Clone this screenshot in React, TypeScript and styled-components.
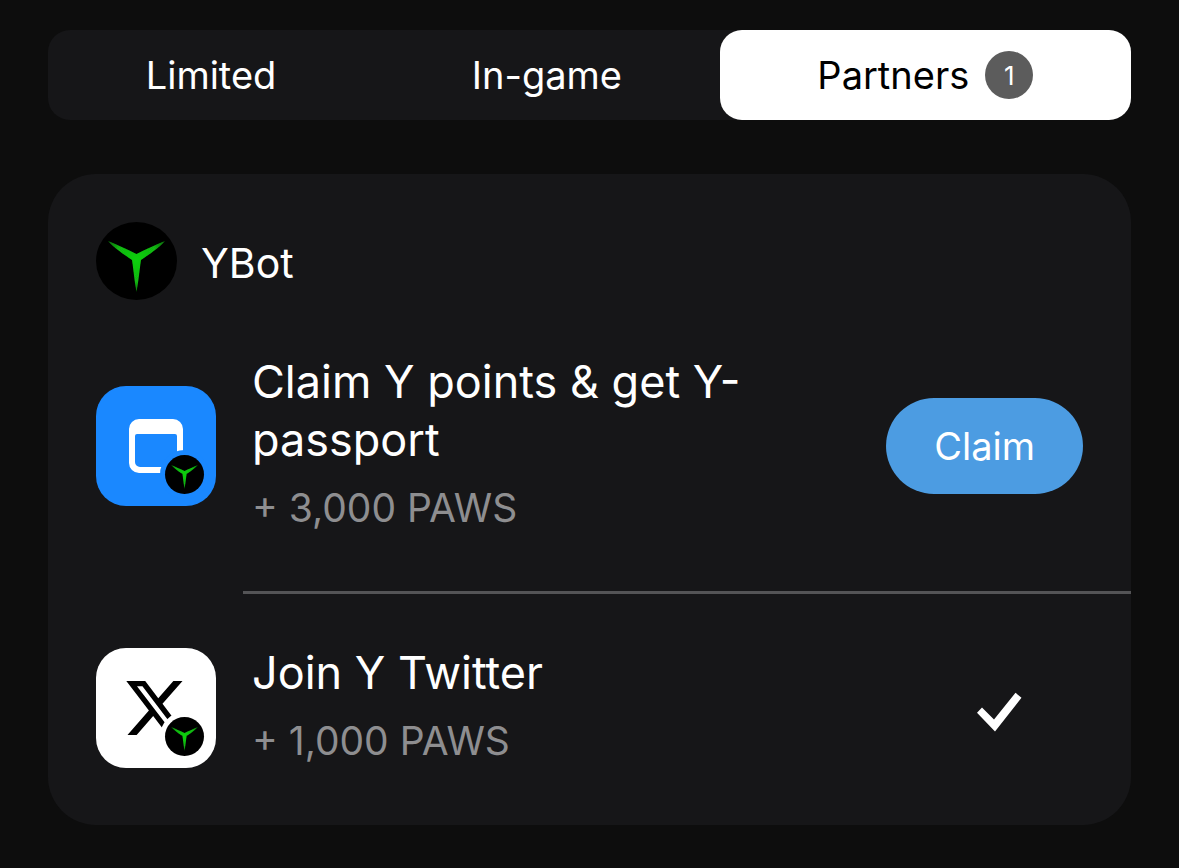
import React, { useId, useState } from 'react';
import styled, { createGlobalStyle } from 'styled-components';

const GlobalStyle = createGlobalStyle`
  * {
    box-sizing: border-box;
  }

  body {
    margin: 0;
    background: #0d0d0d;
    color: #ffffff;
    font-family: Inter, 'Liberation Sans', sans-serif;
  }
`;

const Page = styled.main`
  display: flex;
  flex-direction: column;
  gap: 54px;
  padding: 30px 48px 40px;
`;

const TabBar = styled.div`
  display: flex;
  border-radius: 22px;
  background: #161618;
`;

const Tab = styled.button<{ $active: boolean }>`
  display: flex;
  flex: 1 1 auto;
  align-items: center;
  justify-content: center;
  gap: 16px;
  height: 90px;
  padding: 0 16px;
  border: 0;
  border-radius: 22px;
  background: ${({ $active }) => ($active ? '#ffffff' : 'transparent')};
  color: ${({ $active }) => ($active ? '#000000' : '#ffffff')};
  font: inherit;
  font-size: 38px;
  cursor: pointer;
`;

const TabCount = styled.span`
  display: flex;
  align-items: center;
  justify-content: center;
  width: 48px;
  height: 48px;
  border-radius: 50%;
  background: #5c5c5c;
  color: #ffffff;
  font-size: 26px;
`;

const Card = styled.section`
  padding: 48px 0 1px;
  border-radius: 48px;
  background: #161618;
`;

const PartnerHeader = styled.header`
  display: flex;
  align-items: center;
  gap: 24px;
  padding: 0 48px 3px;
`;

const PartnerName = styled.h2`
  margin: 0;
  padding-top: 4px;
  font-size: 41px;
  font-weight: 400;
  line-height: 50px;
`;

const TaskList = styled.ul`
  margin: 0;
  padding: 0;
  list-style: none;
`;

const TaskItem = styled.li`
  & + &::before {
    content: '';
    display: block;
    height: 3px;
    margin-left: 195px;
    background: #545456;
  }
`;

const TaskRow = styled.div`
  display: flex;
  align-items: center;
  gap: 36px;
  padding: 50px 48px 52px;
`;

const TileSvg = styled.svg`
  flex: none;
  display: block;
  border-radius: 30px;
`;

const TaskText = styled.div`
  flex: 1;
  min-width: 0;
`;

const TaskTitle = styled.h3`
  margin: 0 0 8px;
  font-size: 45px;
  font-weight: 400;
  line-height: 58px;
`;

const Reward = styled.p`
  margin: 0;
  color: #8e8e90;
  font-size: 39px;
  line-height: 62px;
`;

const ClaimButton = styled.button`
  flex: none;
  height: 96px;
  padding: 0 48px;
  border: 0;
  border-radius: 48px;
  background: #4c9ce2;
  color: #ffffff;
  font: inherit;
  font-size: 38px;
  cursor: pointer;
`;

const DoneMark = styled.div`
  display: flex;
  flex: none;
  justify-content: center;
  width: 168px;
  padding-top: 8px;
`;

const Y_SHAPE =
  'M12 19 C20 22 33 28 40.500 32 C48 28 61 22 69 19 C63 26 51 34 45 38 C43.500 48 42.500 60 40.500 70 C38.500 60 37.500 48 36 38 C30 34 18 26 12 19Z';

function YMark() {
  const id = useId();
  return (
    <>
      <defs>
        <radialGradient id={`${id}fill`} gradientUnits="userSpaceOnUse" cx="40.5" cy="38" r="36">
          <stop offset="0" stopColor="#0fd00f" />
          <stop offset="0.6" stopColor="#12b512" />
          <stop offset="1" stopColor="#0a5f0a" />
        </radialGradient>
        <filter id={`${id}glow`} x="-10%" y="-10%" width="120%" height="120%">
          <feGaussianBlur stdDeviation="0.7" />
        </filter>
      </defs>
      <path d={Y_SHAPE} fill={`url(#${id}fill)`} filter={`url(#${id}glow)`} />
    </>
  );
}

function PartnerAvatar() {
  return (
    <svg width="81" height="78" viewBox="0 0 81 78" aria-hidden="true">
      <ellipse cx="40.5" cy="39" rx="40.5" ry="39" fill="#000000" />
      <YMark />
    </svg>
  );
}

function TaskTile({ background, children }: { background: string; children: React.ReactNode }) {
  return (
    <TileSvg width="120" height="120" viewBox="0 0 120 120" aria-hidden="true">
      <rect width="120" height="120" fill={background} />
      {children}
      <circle cx="88.5" cy="88.5" r="24.5" fill={background} />
      <circle cx="88.5" cy="88.5" r="19.5" fill="#000000" />
      <g transform="translate(69.5 70) scale(0.47)">
        <YMark />
      </g>
    </TileSvg>
  );
}

function AppGlyph() {
  return (
    <path
      fill="#ffffff"
      d="M70 87H43A10 10 0 0 1 33 77V43A10 10 0 0 1 43 33H77A10 10 0 0 1 87 43V70H81V50Q81 48 79 48H41Q39 48 39 50V76A5 5 0 0 0 44 81H70Z"
    />
  );
}

function XGlyph() {
  return (
    <path
      fill="#000000"
      transform="translate(30.300 30.100) scale(2.490)"
      d="M18.901 1.153h3.68l-8.04 9.19L24 22.846h-7.406l-5.8-7.584-6.638 7.584H.474l8.6-9.83L0 1.154h7.594l5.243 6.932ZM17.61 20.644h2.039L6.486 3.24H4.298Z"
    />
  );
}

const TABS = [
  { id: 'limited', label: 'Limited' },
  { id: 'in-game', label: 'In-game' },
  { id: 'partners', label: 'Partners', count: 1 },
];

const TASKS = [
  {
    title: 'Claim Y points & get Y-passport',
    reward: '+ 3,000 PAWS',
    background: '#1a88ff',
    glyph: <AppGlyph />,
    done: false,
  },
  {
    title: 'Join Y Twitter',
    reward: '+ 1,000 PAWS',
    background: '#ffffff',
    glyph: <XGlyph />,
    done: true,
  },
];

export default function App() {
  const [active, setActive] = useState('partners');

  return (
    <>
      <GlobalStyle />
      <Page>
        <TabBar role="tablist">
          {TABS.map((tab) => (
            <Tab
              key={tab.id}
              type="button"
              role="tab"
              aria-selected={tab.id === active}
              $active={tab.id === active}
              onClick={() => setActive(tab.id)}
            >
              {tab.label}
              {tab.count && <TabCount>{tab.count}</TabCount>}
            </Tab>
          ))}
        </TabBar>
        <Card>
          <PartnerHeader>
            <PartnerAvatar />
            <PartnerName>YBot</PartnerName>
          </PartnerHeader>
          <TaskList>
            {TASKS.map((task) => (
              <TaskItem key={task.title}>
                <TaskRow>
                  <TaskTile background={task.background}>{task.glyph}</TaskTile>
                  <TaskText>
                    <TaskTitle>{task.title}</TaskTitle>
                    <Reward>{task.reward}</Reward>
                  </TaskText>
                  {task.done ? (
                    <DoneMark>
                      <svg width="46" height="40" viewBox="0 0 46 40" role="img" aria-label="Done">
                        <path d="M1 20.700L6 15.500L18 27.500L39.500 0.700L45.500 5.800L19 39.500Z" fill="#ffffff" />
                      </svg>
                    </DoneMark>
                  ) : (
                    <ClaimButton type="button">Claim</ClaimButton>
                  )}
                </TaskRow>
              </TaskItem>
            ))}
          </TaskList>
        </Card>
      </Page>
    </>
  );
}
